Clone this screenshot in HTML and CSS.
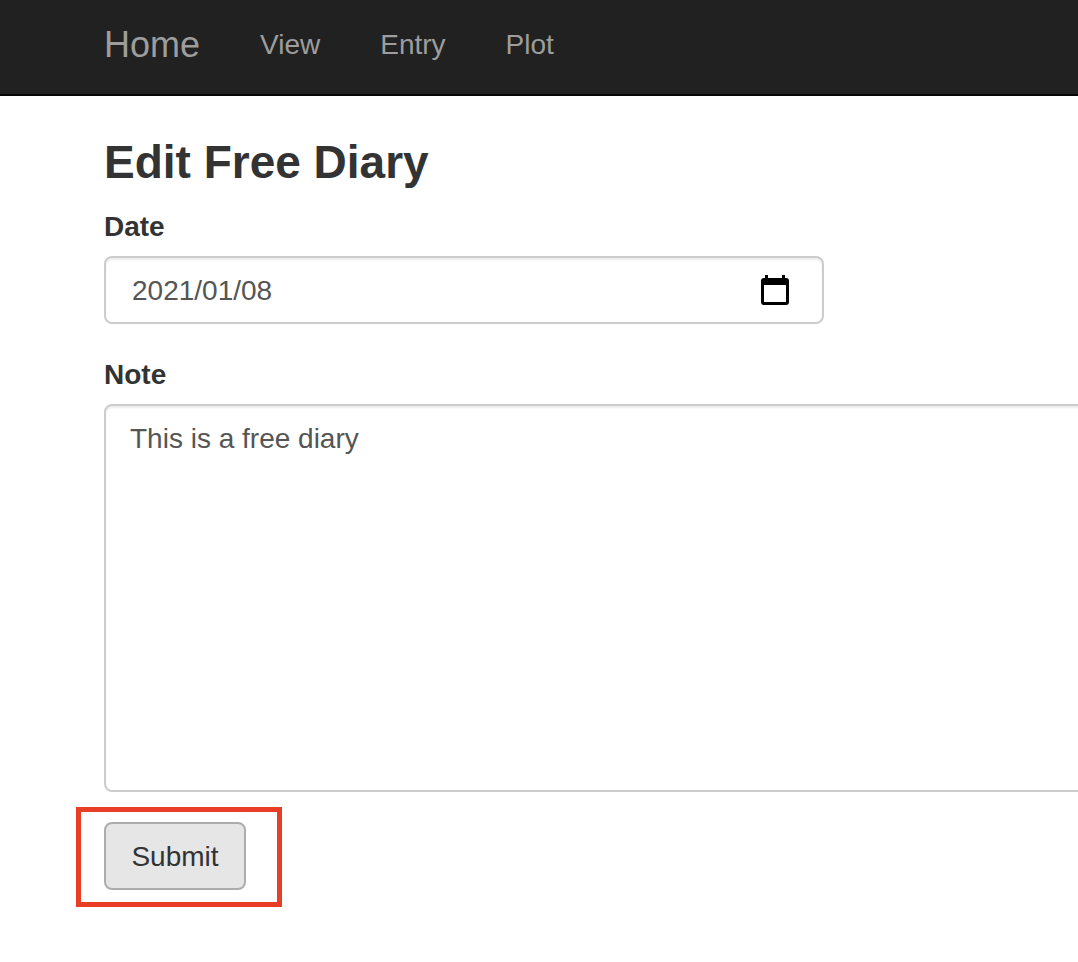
FILE: index.html
```
<!DOCTYPE html>
<html lang="en">
<head>
<meta charset="utf-8">
<title>Edit Free Diary</title>
<link rel="stylesheet" href="styles.css">
</head>
<body>
<nav class="navbar">
  <a class="brand" href="#">Home</a>
  <a class="nav-link" href="#">View</a>
  <a class="nav-link" href="#">Entry</a>
  <a class="nav-link" href="#">Plot</a>
</nav>
<main class="content">
  <h1 class="title">Edit Free Diary</h1>
  <form class="form">
    <label class="label" for="date">Date</label>
    <div class="date-field">
      <input class="date-input" id="date" type="text" value="2021/01/08">
      <button class="date-button" type="button" aria-label="Choose date">
        <svg class="date-icon" viewBox="0 0 28 30" aria-hidden="true">
          <path fill="#000" fill-rule="evenodd" d="M4 0h3v3h14V0h3v3h1a3 3 0 0 1 3 3v21a3 3 0 0 1-3 3H3a3 3 0 0 1-3-3V6a3 3 0 0 1 3-3h1zM3 10v17h22V10z"/>
        </svg>
      </button>
    </div>
    <label class="label" for="note">Note</label>
    <textarea class="note" id="note">This is a free diary</textarea>
    <div class="highlight"><button class="submit" type="button">Submit</button></div>
  </form>
</main>
</body>
</html>
```
FILE: styles.css
```
* {
  box-sizing: border-box;
}

body {
  margin: 0;
  overflow-x: hidden;
  background: #fff;
  color: #333;
  font-family: "Liberation Sans", Arial, sans-serif;
  font-size: 28px;
  line-height: 40px;
}

.navbar {
  display: flex;
  align-items: center;
  gap: 60px;
  padding: 25px 104px 29px;
  background: #212121;
  border-bottom: 2px solid #050505;
}

.brand,
.nav-link {
  color: #9d9d9d;
  text-decoration: none;
}

.brand {
  font-size: 36px;
}

.content {
  padding: 34px 0 40px 104px;
}

.title {
  margin: 0 0 13px;
  font-size: 46px;
  line-height: 64px;
}

.form {
  display: flex;
  flex-direction: column;
  align-items: flex-start;
}

.label {
  margin-bottom: 9px;
  font-weight: bold;
}

.date-field {
  display: flex;
  align-items: center;
  width: 100%;
  max-width: 720px;
  height: 68px;
  margin-bottom: 31px;
  padding: 0 33px 0 26px;
  border: 2px solid #ccc;
  border-radius: 8px;
  box-shadow: inset 0 2px 2px rgba(0, 0, 0, 0.075);
}

.date-input {
  flex: 1;
  min-width: 0;
  padding: 2px 0 0;
  border: 0;
  outline: 0;
  background: transparent;
  color: #555;
  font: inherit;
}

.date-button {
  display: flex;
  padding: 0;
  border: 0;
  background: transparent;
}

.date-icon {
  width: 28px;
  height: 30px;
}

.note {
  width: calc(100% + 16px);
  height: 388px;
  padding: 13px 24px 11px;
  border: 2px solid #ccc;
  border-radius: 8px;
  box-shadow: inset 0 2px 2px rgba(0, 0, 0, 0.075);
  color: #555;
  font: inherit;
  resize: none;
}

.highlight {
  margin: 15px 0 0 -28px;
  padding: 10px 31px 12px 23px;
  border: 5px solid #e93e26;
}

.submit {
  display: block;
  min-width: 142px;
  padding: 13px 24px 11px;
  border: 2px solid #adadad;
  border-radius: 8px;
  background: #e6e6e6;
  color: #333;
  font: inherit;
}
```
